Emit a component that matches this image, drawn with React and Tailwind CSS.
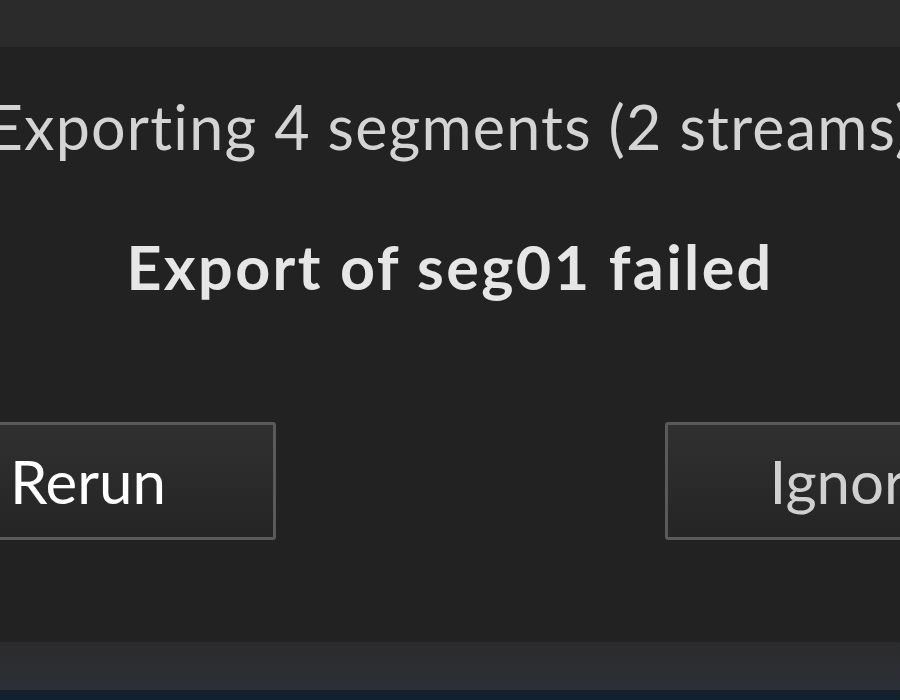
import React from 'react'

const font = { fontFamily: 'Lato, "Open Sans", sans-serif' }

const DialogButton = ({ label, className = '' }) => (
  <button
    className={`h-[118px] shrink-0 rounded-[3px] border-[3px] border-[#5a5a5a] bg-gradient-to-b from-[#303030] to-[#252525] text-[60px] leading-none ${className}`}
  >
    {label}
  </button>
)

export default function App() {
  return (
    <div
      className="flex h-[700px] w-[900px] flex-col overflow-hidden bg-[#222222] [font-variant-ligatures:none]"
      style={font}
    >
      <div className="h-[47px] shrink-0 bg-[#2b2b2b]" />

      <div className="flex flex-1 flex-col">
        <div className="mt-[40px] flex justify-center">
          <p className="whitespace-nowrap text-[61px] leading-[80px] tracking-[1.2px] text-[#d4d4d4]">
            Exporting 4 segments (2 streams)
          </p>
        </div>
        <div className="mt-[60px] flex justify-center">
          <p className="whitespace-nowrap text-[61px] font-bold leading-[80px] tracking-[2.4px] text-[#e6e6e6]">
            Export of seg01 failed
          </p>
        </div>

        <div className="mt-[115px] ml-[-100px] flex gap-[389px]">
          <DialogButton label="Rerun" className="w-[376px] text-white" />
          <DialogButton label="Ignore" className="w-[376px] text-[#d0d0d0]" />
        </div>
      </div>

      <div className="h-[48px] shrink-0 bg-gradient-to-b from-[#2b2b2b] to-[#2b3038]" />
      <div className="h-[10px] shrink-0 bg-[#14202c]" />
    </div>
  )
}
